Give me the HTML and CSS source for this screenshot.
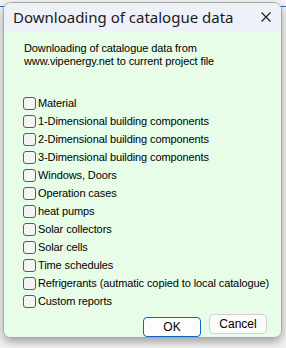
FILE: index.html
```html
<!DOCTYPE html>
<html lang="en">
<head>
    <meta charset="UTF-8">
    <title>Downloading of catalogue data</title>
    <link rel="stylesheet" href="styles.css">
</head>
<body>
    <div class="dialog">
        <div class="titlebar">
            <span class="title">Downloading of catalogue data</span>
            <span class="close-btn">
                <svg width="10" height="10" viewBox="0 0 10 10">
                    <path d="M0.5 0.5 L9.5 9.5 M9.5 0.5 L0.5 9.5" stroke="#1a1a1a" stroke-width="1.1" fill="none"/>
                </svg>
            </span>
        </div>

        <div class="content">
            <p class="intro">
                Downloading of catalogue data from
                <br>
                www.vipenergy.net to current project file
            </p>

            <div class="options">
                <label class="option"><input type="checkbox"><span>Material</span></label>
                <label class="option"><input type="checkbox"><span>1-Dimensional building components</span></label>
                <label class="option"><input type="checkbox"><span>2-Dimensional building components</span></label>
                <label class="option"><input type="checkbox"><span>3-Dimensional building components</span></label>
                <label class="option"><input type="checkbox"><span>Windows, Doors</span></label>
                <label class="option"><input type="checkbox"><span>Operation cases</span></label>
                <label class="option"><input type="checkbox"><span>heat pumps</span></label>
                <label class="option"><input type="checkbox"><span>Solar collectors</span></label>
                <label class="option"><input type="checkbox"><span>Solar cells</span></label>
                <label class="option"><input type="checkbox"><span>Time schedules</span></label>
                <label class="option"><input type="checkbox"><span>Refrigerants (autmatic copied to local catalogue)</span></label>
                <label class="option"><input type="checkbox"><span>Custom reports</span></label>
            </div>

            <div class="buttons">
                <button class="btn btn-ok">OK</button>
                <button class="btn btn-cancel">Cancel</button>
            </div>
        </div>
    </div>
</body>
</html>
```

FILE: styles.css
```css
body {
    margin: 0;
    padding: 2px 4px 0 3px;
    height: 346px;
    font-family: "Liberation Sans", Arial, sans-serif;
    font-size: 11px;
    letter-spacing: -0.1px;
    color: #000;
    background:
        linear-gradient(#2b5fd9, #2b5fd9) 0 6px / 100% 1px no-repeat,
        #f4f4f4;
}

.dialog {
    width: 277px;
    height: 334px;
    border: 1px solid #a8a8a8;
    border-radius: 8px;
    overflow: hidden;
    box-shadow: 0 4px 10px rgba(0,0,0,0.35);
    display: flex;
    flex-direction: column;
}

.titlebar {
    height: 28px;
    background-color: #eff1f9;
    display: flex;
    justify-content: space-between;
    align-items: center;
    padding: 0 10px 0 9px;
}

.title {
    font-family: "Noto Sans", "Open Sans", sans-serif;
    font-size: 15px;
    letter-spacing: 0;
    color: #1a1a1a;
    margin-top: -1px;
}

.close-btn {
    display: flex;
    margin-top: -1px;
}

.content {
    flex: 1;
    background-color: #e7fde7;
    padding: 11px 0 0 20px;
}

.intro {
    margin: 0;
    line-height: 13px;
}

.options {
    margin-top: 26px;
    display: flex;
    flex-direction: column;
}

.option {
    height: 18px;
    display: flex;
    align-items: center;
}

.option input {
    appearance: none;
    width: 13px;
    height: 13px;
    margin: 0 2px 0 -1px;
    border: 1px solid #5c5c5c;
    border-radius: 3px;
    background-color: #f4f4f4;
}

.buttons {
    display: flex;
    justify-content: flex-end;
    align-items: flex-start;
    gap: 8px;
    margin-top: 4px;
    padding-right: 14px;
}

.btn {
    width: 58px;
    height: 20px;
    padding: 0;
    font-family: "Liberation Sans", Arial, sans-serif;
    font-size: 12px;
    color: #000;
    border-radius: 4px;
}

.btn-ok {
    margin-top: 3px;
    background-color: #fdfdfd;
    border: 1px solid #0a63c4;
}

.btn-cancel {
    background-color: #fbfbfb;
    border: 1px solid #d0d0d0;
}
```
